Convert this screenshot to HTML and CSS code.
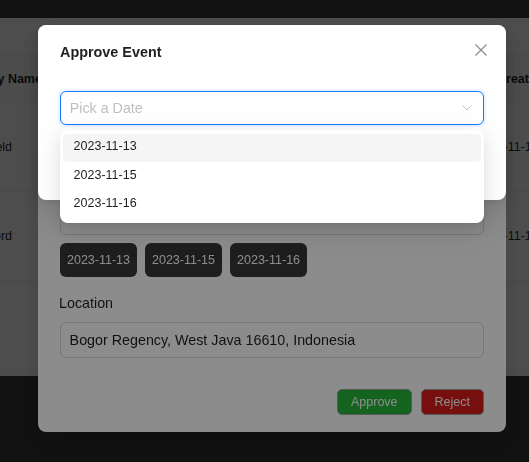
FILE: index.html
```html
<!DOCTYPE html>
<html>
<head>
<meta charset="utf-8">
<link rel="stylesheet" href="styles.css">
</head>
<body>
<div class="page">
  <header class="topbar"></header>
  <main class="main">
    <div class="table">
      <div class="tr th">
        <div class="c1">Property Name</div>
        <div class="cmid"></div>
        <div class="c3">Created At</div>
      </div>
      <div class="tr">
        <div class="c1">Springfield</div>
        <div class="cmid"></div>
        <div class="c3">2023-11-13</div>
      </div>
      <div class="tr">
        <div class="c1">Rutherford</div>
        <div class="cmid"></div>
        <div class="c3">2023-11-15</div>
      </div>
      <div class="tr"></div>
    </div>
  </main>
  <footer class="footer"></footer>
</div>

<div class="mask"></div>
<div class="modal m1">
  <div class="m-title">Approve Event</div>
  <div class="select-under">
    <svg class="chev" width="10" height="6" viewBox="0 0 10 6"><path d="M0.5 0.5 L5 5 L9.5 0.5" fill="none" stroke="#bfbfbf" stroke-width="1"/></svg>
  </div>
  <div class="tags">
    <span class="tag">2023-11-13</span>
    <span class="tag">2023-11-15</span>
    <span class="tag">2023-11-16</span>
  </div>
  <div class="lbl">Location</div>
  <div class="input">Bogor Regency, West Java 16610, Indonesia</div>
  <div class="m-footer">
    <button class="btn btn-ok">Approve</button>
    <button class="btn btn-no">Reject</button>
  </div>
</div>

<div class="mask"></div>
<div class="modal m2">
  <div class="m-title">Approve Event</div>
  <button class="close" aria-label="Close">
    <svg width="12" height="12" viewBox="0 0 12 12"><path d="M0.5 0.5 L11.5 11.5 M11.5 0.5 L0.5 11.5" stroke="#8c8c8c" stroke-width="1.2" fill="none"/></svg>
  </button>
  <div class="select">
    <span class="ph">Pick a Date</span>
    <svg class="chev" width="10" height="6" viewBox="0 0 10 6"><path d="M0.5 0.5 L5 5 L9.5 0.5" fill="none" stroke="#bfbfbf" stroke-width="1"/></svg>
  </div>
</div>

<div class="dropdown">
  <div class="opt active">2023-11-13</div>
  <div class="opt">2023-11-15</div>
  <div class="opt">2023-11-16</div>
</div>
</body>
</html>
```
FILE: styles.css
```css
* { box-sizing: border-box; }
html, body { margin: 0; padding: 0; }
body {
  font-family: "Liberation Sans", Arial, sans-serif;
  color: rgba(0,0,0,0.88);
  width: 529px;
  height: 462px;
  overflow: hidden;
  background: #fff;
}
.page { display: flex; flex-direction: column; height: 462px; }
.topbar { height: 18px; background: #383838; flex: none; }
.main { height: 358px; flex: none; padding-top: 36px; background: #fff; overflow: hidden; }
.footer { flex: 1; background: #383838; }

.table { margin-left: -47px; }
.tr {
  display: flex;
  height: 89px;
  align-items: center;
  border-bottom: 1px solid #f0f0f0;
  font-size: 12.5px;
}
.tr.th { height: 49px; font-weight: 700; background: #fafafa; border-top: 1px solid #f0f0f0; }
.c1 { width: 100px; flex: none; white-space: nowrap; }
.cmid { width: 422.7px; flex: none; }
.c3 { flex: none; white-space: nowrap; }
.tr.th .c3 { padding-left: 21.3px; }

.mask {
  position: fixed;
  inset: 0;
  background: rgba(0,0,0,0.45);
}
.modal {
  position: fixed;
  top: 25px;
  left: 38px;
  width: 468px;
  background: #fff;
  border-radius: 8px;
  box-shadow: 0 6px 16px 0 rgba(0,0,0,0.08), 0 3px 6px -4px rgba(0,0,0,0.12), 0 9px 28px 8px rgba(0,0,0,0.05);
  padding: 16px 22px 17px 22px;
}
.m-title { font-size: 14.4px; font-weight: 700; line-height: 22px; height: 22px; }
.m2 { height: 175px; }
.close {
  position: absolute;
  top: 14px;
  right: 14px;
  width: 22px;
  height: 22px;
  padding: 0;
  border: 0;
  background: transparent;
  display: flex;
  align-items: center;
  justify-content: center;
}
.select {
  margin-top: 28px;
  height: 34px;
  border: 1px solid #1677ff;
  border-radius: 6px;
  box-shadow: 0 0 0 2px rgba(5,145,255,0.1);
  display: flex;
  align-items: center;
  justify-content: space-between;
  padding: 0 11px 0 8.7px;
}
.ph { font-size: 14.3px; color: #bfbfbf; }

.dropdown {
  position: fixed;
  left: 60px;
  top: 129.5px;
  width: 424px;
  background: #fff;
  border-radius: 8px;
  padding: 4px 3px;
  box-shadow: 0 6px 16px 0 rgba(0,0,0,0.08), 0 3px 6px -4px rgba(0,0,0,0.12), 0 9px 28px 8px rgba(0,0,0,0.05);
}
.opt {
  height: 28.4px;
  display: flex;
  align-items: center;
  padding: 0 0 3px 10.6px;
  font-size: 12.5px;
  border-radius: 4px;
  color: rgba(0,0,0,0.88);
}
.opt.active { background: #f5f5f5; }

.lbl { font-size: 14.3px; line-height: 22px; margin: 15.3px 0 0 -1px; }
.input {
  margin-top: 8.5px;
  height: 36px;
  border: 1px solid #d9d9d9;
  border-radius: 6px;
  display: flex;
  align-items: center;
  padding: 0 8.6px;
  font-size: 14.3px;
}
.select-under {
  margin-top: 138px;
  height: 34px;
  border: 1px solid #d9d9d9;
  border-radius: 6px;
  display: flex;
  align-items: center;
  justify-content: flex-end;
  padding-right: 11px;
}
.tags { display: flex; gap: 8px; margin-top: 7.7px; }
.tag {
  height: 34px;
  line-height: 34px;
  padding: 0 7px;
  background: #373737;
  color: #fff;
  border-radius: 6px;
  font-size: 12.5px;
}
.m-footer { display: flex; justify-content: flex-end; gap: 9px; margin-top: 30.5px; }
.btn {
  height: 26.5px;
  padding: 0 13px;
  font-family: "Liberation Sans", Arial, sans-serif;
  font-size: 12.5px;
  color: #fff;
  border: 1px solid #a0a0a0;
  border-radius: 5px;
}
.btn-ok { background: #26b438; }
.btn-no { background: #d91d1d; }
```
